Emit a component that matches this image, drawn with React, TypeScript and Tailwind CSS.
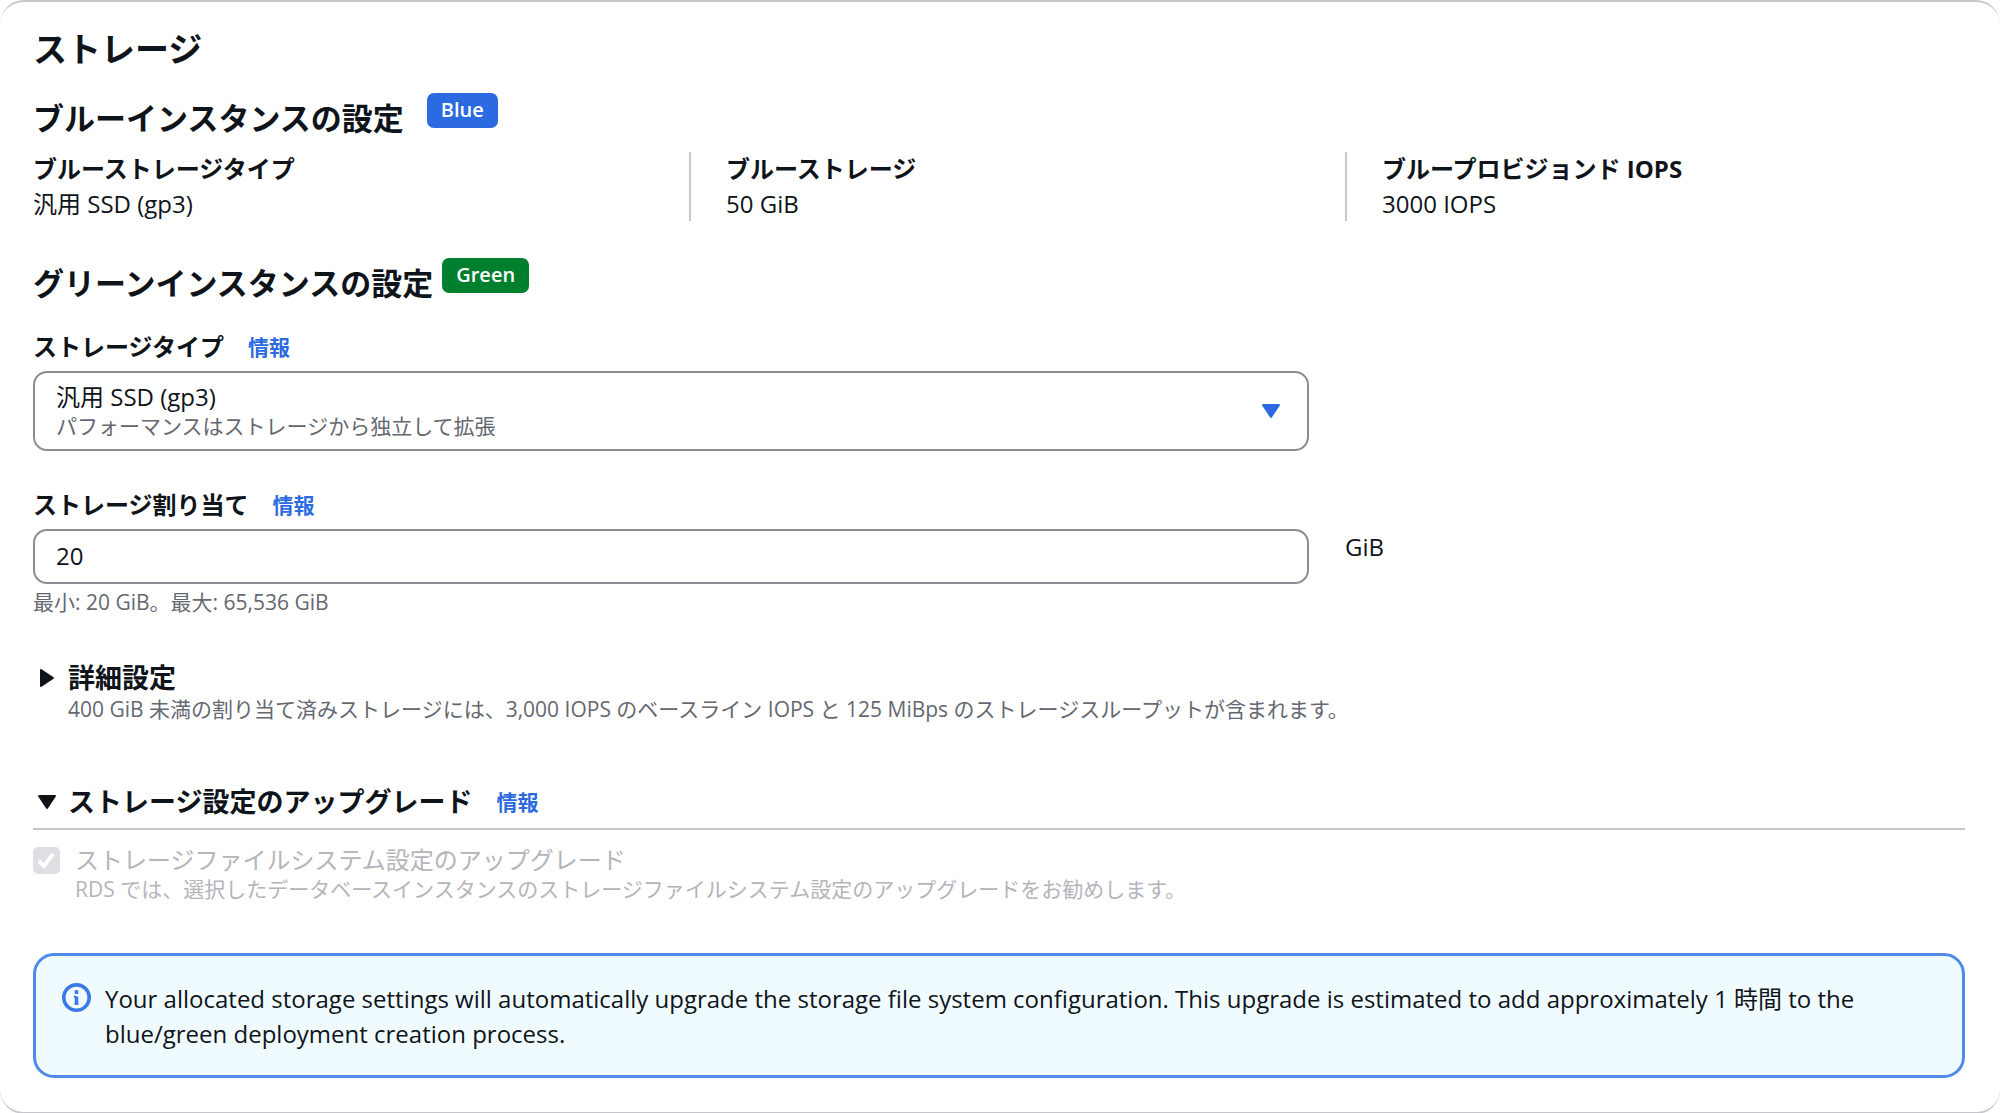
import React, { useState } from 'react';
import clsx from 'clsx';

const BLUE_SETTINGS = [
  { label: 'ブルーストレージタイプ', value: '汎用 SSD (gp3)' },
  { label: 'ブルーストレージ', value: '50 GiB' },
  { label: 'ブループロビジョンド IOPS', value: '3000 IOPS' },
];

function Badge({ color, className, children }: { color: 'blue' | 'green'; className?: string; children: React.ReactNode }) {
  return (
    <span
      className={clsx(
        'h-[35px] px-[14px] rounded-[7px] text-[20px] leading-[34px] font-semibold text-white',
        color === 'blue' ? 'bg-[#2b6ae0]' : 'bg-[#00802f]',
        className
      )}
    >
      {children}
    </span>
  );
}

function InfoLink() {
  return (
    <a href="#info" className="ml-6 pt-[2px] text-[21px] leading-[33px] font-bold text-[#2b6ae0]">
      情報
    </a>
  );
}

function Caret({ className, open = true }: { className?: string; open?: boolean }) {
  return (
    <svg viewBox="0 0 20 20" className={clsx('w-5 h-5 shrink-0', !open && '-rotate-90', className)} aria-hidden="true">
      <path d="M2 4h16l-8 12z" fill="currentColor" stroke="currentColor" strokeWidth="2" strokeLinejoin="round" />
    </svg>
  );
}

export default function App() {
  const [allocated, setAllocated] = useState('20');

  return (
    <section className="border-y-2 border-[#c6c6cd] rounded-[24px] bg-white pl-[33px] pr-[35px] pt-[27px] pb-[34px] text-[24px] leading-[35px] text-[#0f141a] font-['Open_Sans','Noto_Sans_CJK_JP',sans-serif]">
      <h2 className="text-[34px] leading-10 font-bold">ストレージ</h2>

      <div className="mt-6 flex items-start">
        <h3 className="pt-[5px] text-[31px] leading-10 font-bold">ブルーインスタンスの設定</h3>
        <Badge color="blue" className="ml-[23px]">Blue</Badge>
      </div>

      <dl className="mt-[14px] grid grid-cols-3 gap-9">
        {BLUE_SETTINGS.map((item, i) => (
          <div key={item.label} className={clsx(i > 0 && 'border-l-2 border-[#c6c6cd] pl-[35px]')}>
            <dt className="leading-[34px] font-bold">{item.label}</dt>
            <dd>{item.value}</dd>
          </div>
        ))}
      </dl>

      <div className="mt-[37px] flex items-start">
        <h3 className="pt-[5px] text-[31px] leading-10 font-bold">グリーンインスタンスの設定</h3>
        <Badge color="green" className="ml-[9px]">Green</Badge>
      </div>

      <div className="mt-[26px] flex">
        <label htmlFor="storage-type" className="font-bold">ストレージタイプ</label>
        <InfoLink />
      </div>
      <div className="mt-[7px] grid grid-cols-3 gap-9">
        <div className="relative col-span-2">
          <select
            id="storage-type"
            className="block w-full h-20 appearance-none rounded-[14px] border-2 border-[#8c8c94] bg-white px-[21px] pt-[6px] pb-[36px]"
          >
            <option>汎用 SSD (gp3)</option>
          </select>
          <p className="pointer-events-none absolute left-[23px] bottom-[13px] text-[21px] leading-6 text-[#656871]">
            パフォーマンスはストレージから独立して拡張
          </p>
          <Caret className="pointer-events-none absolute right-7 top-[30px] text-[#2b6ae0]" />
        </div>
      </div>

      <div className="mt-9 flex">
        <label htmlFor="allocated-storage" className="font-bold">ストレージ割り当て</label>
        <InfoLink />
      </div>
      <div className="mt-[7px] grid grid-cols-3 gap-9">
        <div className="col-span-2">
          <input
            id="allocated-storage"
            type="text"
            inputMode="numeric"
            value={allocated}
            onChange={(e) => setAllocated(e.target.value)}
            className="block w-full h-[55px] rounded-[14px] border-2 border-[#8c8c94] bg-white px-[21px] pb-[2px]"
          />
          <p className="mt-1 text-[21px] leading-7 text-[#656871]">最小: 20 GiB。最大: 65,536 GiB</p>
        </div>
        <span>GiB</span>
      </div>

      <div className="mt-[45px]">
        <button type="button" aria-expanded="false" className="flex items-center gap-[15px] text-[27px] leading-[34px] font-bold">
          <Caret open={false} className="ml-1 -mr-1" />
          詳細設定
        </button>
        <p className="pl-[35px] text-[21px] leading-7 text-[#656871]">
          400 GiB 未満の割り当て済みストレージには、3,000 IOPS のベースライン IOPS と 125 MiBps のストレージスループットが含まれます。
        </p>
      </div>

      <div className="mt-[61px] flex border-b-2 border-[#c6c6cd] pb-[9px]">
        <button type="button" aria-expanded="true" className="flex items-center gap-[15px] text-[27px] leading-[34px] font-bold">
          <Caret className="ml-1 -mr-1" />
          ストレージ設定のアップグレード
        </button>
        <InfoLink />
      </div>

      <div className="mt-[13px] flex items-start text-[#b4b4bb]">
        <span className="relative mt-1 shrink-0">
          <input
            id="upgrade-fs"
            type="checkbox"
            checked
            disabled
            readOnly
            className="block w-[27px] h-[27px] appearance-none rounded-[5px] bg-[#dedee3]"
          />
          <svg viewBox="0 0 27 27" className="pointer-events-none absolute inset-0" aria-hidden="true">
            <path d="M6 14l5 5 9-12" fill="none" stroke="#fff" strokeWidth="4" />
          </svg>
        </span>
        <div className="pl-[15px]">
          <label htmlFor="upgrade-fs" className="block leading-[34px]">ストレージファイルシステム設定のアップグレード</label>
          <p className="text-[21px] leading-6">
            RDS では、選択したデータベースインスタンスのストレージファイルシステム設定のアップグレードをお勧めします。
          </p>
        </div>
      </div>

      <div role="status" className="mt-[52px] flex items-start gap-[14px] rounded-[21px] border-[3px] border-[#4f8aea] bg-[#f0fbff] pt-[25px] pb-6 px-[26px]">
        <svg viewBox="0 0 16 16" className="mt-[2px] w-[29px] h-[29px] shrink-0 text-[#3b78ea]" fill="none" stroke="currentColor" strokeWidth="2" aria-hidden="true">
          <circle cx="8" cy="8" r="7" />
          <path d="M8 12V7.5M8 4v2" />
          <path d="M6.5 7.5H8M7 11.5h2" strokeWidth="1" />
        </svg>
        <p>
          Your allocated storage settings will automatically upgrade the storage file system configuration. This upgrade is estimated to add approximately 1 時間 to the blue/green deployment creation process.
        </p>
      </div>
    </section>
  );
}
